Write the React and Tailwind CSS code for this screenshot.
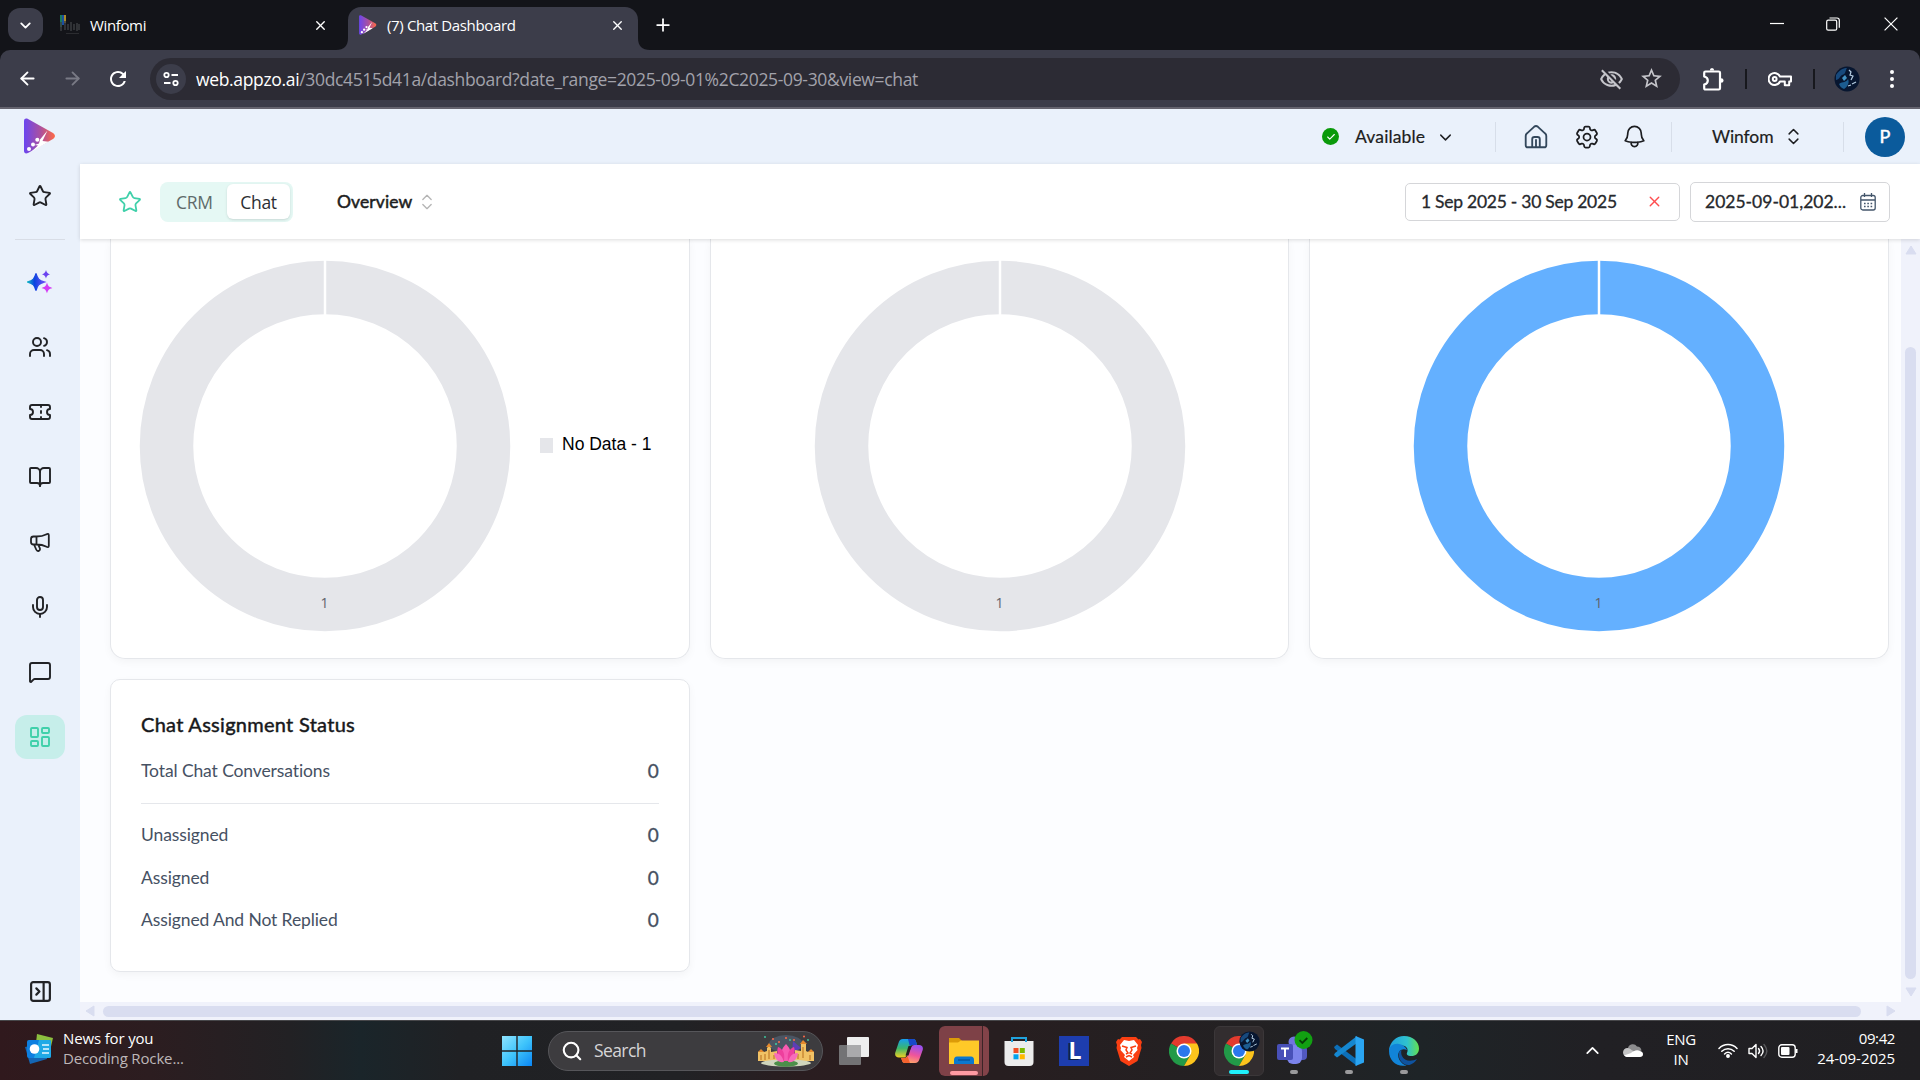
import React from "react";
import { ArrowLeft, ArrowRight, BookOpen, Check, ChevronDown, ChevronUp, ChevronsUpDown, LayoutDashboard, MessageSquare, Mic, PanelRightClose, Plus, Search, Star, Ticket, Users, X } from "lucide-react";
import { HiOutlineCog6Tooth, HiOutlineBell } from "react-icons/hi2";
import { MdOutlineVisibilityOff, MdStarOutline, MdRefresh } from "react-icons/md";

function PlayLogo({ className, id }) {
  return (
    <svg viewBox="0 0 32 36" className={className}>
      <defs>
        <linearGradient id={id} x1="0" x2="1">
          <stop offset="0" stopColor="#6b46f0" />
          <stop offset="0.55" stopColor="#ad519c" />
          <stop offset="1" stopColor="#ff6a45" />
        </linearGradient>
      </defs>
      <path d="M0 3C0 .6 2 0 4 1l25 14c2.600 1.600 2.600 4.400 0 6L4 35c-2 1-4 .4-4-2z" fill={`url(#${id})`} />
      <path d="M23.500 12.500 18.500 23l6 .8L7 34l7-6.500-3.500-.5 4.500-1.500 1-4z" fill="#fff" />
      <circle cx="5" cy="31" r="2" fill="#fff" />
      <circle cx="9" cy="26.500" r="2" fill="#fff" />
      <circle cx="13.300" cy="21.800" r="2" fill="#fff" />
    </svg>
  );
}

function Planet({ className }) {
  return (
    <svg viewBox="0 0 26 26" className={className}>
      <circle cx="13" cy="13" r="12.500" fill="#071630" />
      <path d="M2 9c4-6 8-7 11-7-2 3-1 6-5 7-2 1-3 5-6 5z" fill="#17497c" />
      <path d="M5 18c4-3 7-1 9-5 2 4-1 8-4 10-3-1-4-3-5-5z" fill="#1c5c90" />
      <path d="M15 4l2 2-1 3 3 1-2 4M18 18l4-2M14 20l3-1" stroke="#b5cde2" strokeWidth="1.200" fill="none" />
      <path d="M8 12l3-3 2 3-3 3z" fill="#4393c4" />
    </svg>
  );
}

function BrowserTabs() {
  return (
    <div className="flex h-[50px] shrink-0 items-start bg-[#131419] text-[15px] tracking-[-0.36px] text-white">
      <div className="ml-2 mt-2 flex h-[34px] w-[35px] items-center justify-center rounded-xl bg-[#3c3d4a]">
        <ChevronDown size={17} strokeWidth={2.600} />
      </div>
      <div className="ml-[17px] flex h-[50px] w-[288px] items-center">
        <svg viewBox="0 0 20 20" className="h-5 w-5">
          <path d="M0 0h2v12H0z" fill="#1b7a5a" /><path d="M2 0h2v10H2z" fill="#1b4fa0" /><path d="M4 0h2v8H4z" fill="#a98a2a" />
          <path d="M1 7v9M5 6v9M8 9v6M11 7v9M14 9v6M17 8v8M19 9v6" stroke="#3b3c40" strokeWidth="1.500" />
          <path d="M6 18.500h13" stroke="#2b2c30" />
        </svg>
        <span className="ml-[10px]">Winfomi</span>
        <X size={15} strokeWidth={2.200} className="ml-auto mr-[20px]" />
      </div>
      <svg viewBox="0 0 12 12" className="-ml-3 h-3 w-3 self-end"><path d="M12 0v12H0C8 12 12 8 12 0z" fill="#3c3d4a" /></svg>
      <div className="mt-[7px] flex h-[43px] w-[290px] items-center rounded-t-[13px] bg-[#3c3d4a] pb-[7px]">
        <PlayLogo id="tabLogo" className="ml-[11px] h-5 w-[18px]" />
        <span className="ml-[10px]">(7) Chat Dashboard</span>
        <X size={15} strokeWidth={2.200} className="ml-auto mr-[13px]" />
      </div>
      <svg viewBox="0 0 12 12" className="h-3 w-3 self-end"><path d="M0 0v12h12C4 12 0 8 0 0z" fill="#3c3d4a" /></svg>
      <Plus size={20} strokeWidth={2.100} className="ml-[3px] mt-[15px]" />
      <div className="ml-auto mr-[22px] mt-[17px] flex items-center">
        <svg viewBox="0 0 14 14" className="h-[14px] w-[14px]"><path d="M0 6.500h14" stroke="#fff" strokeWidth="1.200" /></svg>
        <svg viewBox="0 0 14 14" className="ml-[42px] h-[14px] w-[14px]" fill="none" stroke="#fff" strokeWidth="1.200">
          <rect x=".7" y="3.200" width="10" height="10" rx="1.500" /><path d="M3.500 1h7.500c1.500 0 2.300.8 2.300 2.300v7.500" />
        </svg>
        <svg viewBox="0 0 14 14" className="ml-11 h-[14px] w-[14px]"><path d="M.6.6l12.800 12.800M13.400.6L.6 13.400" stroke="#fff" strokeWidth="1.200" /></svg>
      </div>
    </div>
  );
}

function BrowserToolbar() {
  return (
    <div className="h-[59px] shrink-0 bg-[#131419]">
      <div className="flex h-[59px] items-center rounded-t-[10px] border-b-2 border-[#65646f] bg-[#3c3d4a] text-white">
        <ArrowLeft size={21} strokeWidth={2.100} className="ml-[17px]" />
        <ArrowRight size={21} strokeWidth={2.100} className="ml-6 text-[#797a85]" />
        <MdRefresh size={24} className="ml-[23px]" />
        <div className="ml-5 flex h-[42px] w-[1530px] items-center rounded-full bg-[#2c2b34] pl-[6px] pr-[16px]">
          <span className="flex h-[30px] w-[30px] items-center justify-center rounded-full bg-[#3c3d4a]">
            <svg viewBox="0 0 16 16" className="h-4 w-4" fill="none" stroke="#fff" strokeWidth="1.800">
              <circle cx="3.500" cy="4" r="2.200" /><path d="M8.500 4H15M1 12h6.500" /><circle cx="12.500" cy="12" r="2.200" />
            </svg>
          </span>
          <span className="ml-[10px] mt-[2px] whitespace-nowrap text-[17.5px] tracking-[-0.34px] text-[#a2a2ab]">
            <span className="text-white">web.appzo.ai</span>/30dc4515d41a/dashboard?date_range=2025-09-01%2C2025-09-30&amp;view=chat
          </span>
          <MdOutlineVisibilityOff size={25} className="ml-auto mt-px text-[#c5c5ca]" />
          <MdStarOutline size={25} className="ml-[15px] text-[#c5c5ca]" />
        </div>
        <svg viewBox="0 0 22 26" className="ml-[22px] h-[26px] w-[22px]" fill="none" stroke="#fff" strokeWidth="2.200" strokeLinejoin="round">
          <path d="M3.500 5.500h13.200q1.300 0 1.300 1.300v15.400q0 1.300-1.300 1.300H3.500q-1.300 0-1.300-1.300v-3.700q3.600-.8 3.600-4t-3.600-4V6.800q0-1.300 1.300-1.300z" />
          <path d="M7.800 4.500a2.200 2.600 0 0 1 4.400 0zM19 12.300a2.600 2.200 0 0 1 0 4.400z" fill="#fff" stroke="none" />
        </svg>
        <span className="ml-[21px] h-5 w-[2px] bg-[#17181d]" />
        <svg viewBox="0 0 24 18" className="ml-[21px] h-[18px] w-6" fill="none" stroke="#fff" strokeWidth="2" strokeLinejoin="round">
          <path d="M12 6.500H23v5h-1.800v3.800h-4.400v-3.800H12a6 6 0 1 1 0-5z" /><circle cx="6.700" cy="9" r="1.900" />
        </svg>
        <span className="ml-[21px] h-5 w-[2px] bg-[#17181d]" />
        <Planet className="ml-[19px] h-[26px] w-[26px]" />
        <svg viewBox="0 0 4 18" className="ml-[30px] h-[18px] w-1" fill="#fff"><circle cx="2" cy="2" r="2" /><circle cx="2" cy="9" r="2" /><circle cx="2" cy="16" r="2" /></svg>
      </div>
    </div>
  );
}

function Sparkles() {
  return (
    <svg viewBox="0 0 26 26" className="h-[26px] w-[26px]">
      <defs>
        <linearGradient id="spark" x1="0" x2="1"><stop offset="0" stopColor="#12b5c5" /><stop offset="0.4" stopColor="#0b45e0" /><stop offset="1" stopColor="#6a4df5" /></linearGradient>
      </defs>
      <path d="M9 4.500c1.300 5.200 3 7 8.300 8.500C12 14.500 10.300 16.300 9 21.500 7.700 16.300 6 14.500.7 13 6 11.500 7.700 9.700 9 4.500z" fill="url(#spark)" stroke="url(#spark)" strokeWidth="1.300" />
      <path d="M19 1c.9 2.800 1.400 3.400 4.200 4.300-2.800.9-3.300 1.500-4.200 4.300-.9-2.800-1.400-3.400-4.200-4.300C17.600 4.400 18.100 3.800 19 1z" fill="#6a42f0" />
      <path d="M20 13.500c1.100 3.600 1.800 4.300 5.400 5.400-3.600 1.100-4.300 1.800-5.400 5.400-1.100-3.600-1.800-4.300-5.400-5.400 3.600-1.100 4.300-1.800 5.400-5.400z" fill="#d43cf5" />
    </svg>
  );
}

function Megaphone() {
  return (
    <svg viewBox="0 0 24 24" className="h-6 w-6" fill="none" stroke="currentColor" strokeWidth="1.800" strokeLinejoin="round" strokeLinecap="round">
      <path d="M8.500 6.500H5.500a2.500 2.500 0 0 0-2.500 2.500v3a2.500 2.500 0 0 0 2.500 2.500h3zM8.500 6.500c4 0 7-.6 9.500-2 1.800-1 2.800-.8 2.800.8v10.400c0 1.600-1 1.800-2.800.8-2.500-1.400-5.500-2-9.500-2M6 14.500l2.200 5c.5 1.100 1.500 1.700 2.600 1.300 1.100-.4 1.500-1.500 1-2.600l-1.600-3.500" />
    </svg>
  );
}

function Sidebar() {
  const items = [Users, Ticket, BookOpen, Megaphone, Mic, MessageSquare];
  return (
    <aside className="flex w-20 shrink-0 flex-col items-center bg-[#eaf1fb] pr-px text-[#222326]">
      <PlayLogo id="appLogo" className="mt-[9px] h-9 w-8" />
      <Star size={24} strokeWidth={1.900} className="mt-[30px]" />
      <div className="mt-[31px] h-px w-[50px] bg-[#d8dde6]" />
      <div className="mt-[20px] flex h-11 items-center"><Sparkles /></div>
      <div className="mt-[21px] flex flex-col gap-[21px]">
        {items.map((Icon, i) => (
          <div key={i} className="flex h-11 w-[50px] items-center justify-center"><Icon size={24} strokeWidth={1.900} /></div>
        ))}
        <div className="flex h-11 w-[50px] items-center justify-center rounded-xl bg-[#c6eeea] text-[#40d0aa]"><LayoutDashboard size={24} strokeWidth={1.900} /></div>
      </div>
      <PanelRightClose size={25} strokeWidth={2.100} className="mb-[16px] ml-px mt-auto" />
    </aside>
  );
}

function AppHeader() {
  return (
    <header className="flex h-[55px] shrink-0 items-center bg-[#eaf1fb] font-[Lato,sans-serif] text-[17.5px] text-[#1c1d20]">
      <span className="ml-[1242px] flex h-[17px] w-[17px] items-center justify-center rounded-full bg-[#0a9a0a] text-white"><Check size={10} strokeWidth={2.600} /></span>
      <span className="ml-4 mt-[2px] w-[70px] tracking-[0.15px] [-webkit-text-stroke:0.2px]">Available</span>
      <ChevronDown size={19} strokeWidth={1.800} className="ml-[11px] mt-px" />
      <span className="ml-[40px] h-[30px] w-px bg-[#d7dee9]" />
      <svg viewBox="0 0 24 24" className="ml-[27px] h-[26px] w-[26px] text-[#33475b]" fill="none" stroke="currentColor" strokeWidth="1.700" strokeLinejoin="round">
        <path d="M2.500 11c0-1 .4-1.700 1.200-2.400l6.500-6c1.100-.9 2.500-.9 3.600 0l6.500 6c.8.700 1.200 1.400 1.200 2.400v8.500a2 2 0 0 1-2 2h-15a2 2 0 0 1-2-2zM8.500 21.500V14a2 2 0 0 1 2-2h3a2 2 0 0 1 2 2v7.500M12 14v7.500" />
      </svg>
      <HiOutlineCog6Tooth size={28} className="ml-[24px]" />
      <HiOutlineBell size={27} className="ml-[20px]" />
      <span className="ml-[23px] h-[30px] w-px bg-[#d7dee9]" />
      <span className="ml-10 mt-[2px] w-[62px] tracking-[-0.1px] [-webkit-text-stroke:0.2px]">Winfom</span>
      <ChevronsUpDown size={21} strokeWidth={1.700} className="ml-[9px]" />
      <span className="ml-[39px] h-[30px] w-px bg-[#d7dee9]" />
      <span className="ml-[21px] flex h-10 w-10 items-center justify-center rounded-full bg-[#0b5b9c] text-[18px] text-white [-webkit-text-stroke:0.5px]">P</span>
    </header>
  );
}

function FilterBar() {
  return (
    <div className="relative flex h-[75px] shrink-0 items-center bg-white font-[Lato,sans-serif] text-[17.5px] text-[#26282c] shadow-[0_1px_4px_rgba(0,0,0,0.14)]">
      <Star size={24} strokeWidth={1.800} className="ml-[38px] text-[#40d0aa]" />
      <div className="ml-[18px] flex h-10 w-[133px] items-center rounded-lg bg-[#e5f8f4] p-[3px] font-['Open_Sans',sans-serif] tracking-[-0.3px]">
        <span className="mt-[2px] w-16 pl-[13px] text-[#5f6b6a]">CRM</span>
        <span className="flex h-[35px] w-[63px] items-center justify-center rounded-md bg-white pt-[2px] text-[#2c2e33] shadow-sm">Chat</span>
      </div>
      <span className="ml-11 mt-[2px] w-[77px] tracking-[0.1px] text-[#1c1d20] [-webkit-text-stroke:0.5px]">Overview</span>
      <ChevronsUpDown size={20} strokeWidth={1.600} className="ml-[3px] text-[#b5b5b5]" />
      <div className="ml-auto flex h-[38px] w-[275px] items-center justify-between rounded-[5px] border border-[#d5d6d9] pl-[15px] pr-4">
        <span className="mt-[2px] whitespace-nowrap tracking-[-0.26px] [-webkit-text-stroke:0.3px]">1 Sep 2025 - 30 Sep 2025</span>
        <X size={17} strokeWidth={1.900} className="text-[#ff4d4f]" />
      </div>
      <div className="ml-[10px] mr-[30px] flex h-10 w-[200px] items-center justify-between rounded-[5px] border border-[#d5d6d9] pl-[14px] pr-[13px]">
        <span className="mt-[2px] whitespace-nowrap [-webkit-text-stroke:0.3px]">2025-09-01,202...</span>
        <svg viewBox="0 0 16 18" className="h-[18px] w-4 text-[#44566b]" fill="none" stroke="currentColor" strokeWidth="1.300">
          <rect x=".8" y="2.500" width="14.400" height="14.500" rx="2" /><path d="M1 7h14M4.500 0v4M11.500 0v4" /><path d="M4 10.500h8.500M4 13.500h8.500" strokeDasharray="1.600 1.700" />
        </svg>
      </div>
    </div>
  );
}

function Donut({ color }) {
  return (
    <svg viewBox="0 0 372 372" className="h-[372px] w-[372px] shrink-0">
      <circle cx="186" cy="186" r="158.500" fill="none" stroke={color} strokeWidth="53.500" />
      <path d="M186 0v56" stroke="#fff" strokeWidth="2.500" />
      <text x="185.500" y="347.500" textAnchor="middle" fontSize="14" fill="#5f636b" className="font-['Open_Sans',sans-serif]">1</text>
    </svg>
  );
}

function StatRow({ label, value }) {
  return (
    <div className="flex justify-between leading-6">
      <span className="tracking-[-0.11px]">{label}</span>
      <span className="text-[19px] [-webkit-text-stroke:0.3px]">{value}</span>
    </div>
  );
}

function Scroller() {
  return (
    <div className="flex min-h-0 flex-1 flex-col">
      <div className="flex min-h-0 flex-1">
        <main className="w-[1821px] bg-[#fcfdff] pl-[30px] pr-3">
          <div className="grid grid-cols-3 gap-5">
            <div className="flex h-[420px] items-start rounded-b-[15px] border border-t-0 border-[#e5e7eb] bg-white pl-[28px] pt-[20.5px] shadow-[0_3px_8px_rgba(0,0,0,0.04)]">
              <Donut color="#e5e6ea" />
              <div className="ml-[29px] flex h-[370px] items-center">
                <span className="mt-[2px] h-[15px] w-[13px] bg-[#e5e6ea]" />
                <span className="ml-[9px] whitespace-nowrap font-['Liberation_Sans',sans-serif] text-[17.5px] text-black">No Data - 1</span>
              </div>
            </div>
            <div className="flex h-[420px] items-start justify-center rounded-b-[15px] border border-t-0 border-[#e5e7eb] bg-white pl-px pt-[20.5px] shadow-[0_3px_8px_rgba(0,0,0,0.04)]"><Donut color="#e5e6ea" /></div>
            <div className="flex h-[420px] items-start justify-center rounded-b-[15px] border border-t-0 border-[#e5e7eb] bg-white pt-[20.5px] shadow-[0_3px_8px_rgba(0,0,0,0.04)]"><Donut color="#64b0ff" /></div>
            <section className="h-[293px] rounded-[10px] border border-[#e5e7eb] bg-white px-[30px] pt-[31px] font-[Lato,sans-serif] text-[17.5px] text-[#465163] shadow-[0_3px_8px_rgba(0,0,0,0.04)]">
              <h2 className="text-[20px] leading-[26px] tracking-[0.28px] text-[#17181b] [-webkit-text-stroke:0.45px]">Chat Assignment Status</h2>
              <div className="mt-[22px] border-b border-[#e5e7eb] pb-[20px]"><StatRow label="Total Chat Conversations" value="0" /></div>
              <div className="mt-[19px] flex flex-col gap-[18.5px]">
                <StatRow label="Unassigned" value="0" />
                <StatRow label="Assigned" value="0" />
                <StatRow label="Assigned And Not Replied" value="0" />
              </div>
            </section>
          </div>
        </main>
        <div className="flex w-[19px] flex-col items-center bg-[#f0f2fb]">
          <svg viewBox="0 0 12 10" className="mt-[6px] h-[10px] w-3" fill="#d9ddf0"><path d="M6 1l5 8H1z" stroke="#d9ddf0" strokeLinejoin="round" /></svg>
          <div className="mt-[92px] h-[632px] w-[11px] rounded-full bg-[#d9ddf0]" />
          <svg viewBox="0 0 12 10" className="mt-2 h-[10px] w-3" fill="#d9ddf0"><path d="M6 9l5-8H1z" stroke="#d9ddf0" strokeLinejoin="round" /></svg>
        </div>
      </div>
      <div className="flex h-[18px] shrink-0 items-center bg-[#f0f2fb]">
        <svg viewBox="0 0 10 12" className="ml-[5px] h-3 w-[10px]" fill="#d9ddf0"><path d="M1 6l8-5v10z" stroke="#d9ddf0" strokeLinejoin="round" /></svg>
        <div className="ml-2 h-[11px] w-[1758px] rounded-full bg-[#d9ddf0]" />
        <svg viewBox="0 0 10 12" className="ml-[25px] h-3 w-[10px]" fill="#d9ddf0"><path d="M9 6L1 1v10z" stroke="#d9ddf0" strokeLinejoin="round" /></svg>
      </div>
    </div>
  );
}

function ChromeIcon() {
  return (
    <svg viewBox="0 0 30 30" className="h-[30px] w-[30px]">
      <path d="M15 15L2 7.500A15 15 0 0 1 28 7.500z" fill="#e33b2e" />
      <path d="M2 7.500A15 15 0 0 0 15 30l6.500-11.200L15 15z" fill="#229a48" />
      <path d="M28 7.500A15 15 0 0 1 15 30l6.500-11.200L15 7.500z" fill="#fdc41c" />
      <circle cx="15" cy="15" r="7.500" fill="#fff" /><circle cx="15" cy="15" r="6" fill="#2b77ec" />
    </svg>
  );
}

function TaskCell({ children, dot, className = "" }) {
  return (
    <div className="flex w-[55px] justify-center">
      <div className={`relative flex h-[50px] w-[50px] items-center justify-center rounded-md ${className}`}>
        {children}
        {dot}
      </div>
    </div>
  );
}

const grayDot = <span className="absolute bottom-[2px] h-1 w-2 rounded-full bg-[#9a9a9c]" />;

function Lotus() {
  return (
    <svg viewBox="0 0 58 32" className="h-8 w-[58px]">
      <ellipse cx="29" cy="9" rx="17" ry="9" fill="#4b5563" />
      <path d="M36 6l8 7-9 5z" fill="#5b3fb5" />
      <path d="M1 26V17l3-2 3 2 3-1v-3l2-2 2 2v4l6-1v10zM57 26V17l-3-2-3 2-2-1V9l-2.500-2L44 9v7l-6-1v11z" fill="#f1c265" />
      <path d="M9 12l3-4 3 4zM43 9l3-4 4 4zM1 17l3-3 3 3zM51 17l3-3 3 3z" fill="#e58a2d" />
      <path d="M4 20v5M8 19v6M12 15v9M17 20v4M41 19v5M46 12v11M53 20v5" stroke="#c17c2b" strokeWidth="1.200" />
      <ellipse cx="29" cy="28" rx="25" ry="3.500" fill="#cfd6bd" />
      <ellipse cx="29" cy="28.500" rx="12" ry="3.200" fill="#4c8f4a" />
      <path d="M29 9c5 5 6 10 3 17h-6c-3-7-2-12 3-17z" fill="#f75bb2" />
      <path d="M21 12c5 2 7 6 6 14-6-2-8-8-6-14zM37 12c-5 2-7 6-6 14 6-2 8-8 6-14z" fill="#ee3f9d" />
      <path d="M17 18c6 0 8 3 10 9-6 1-9-3-10-9zM41 18c-6 0-8 3-10 9 6 1 9-3 10-9z" fill="#f86dba" />
      <g fill="#ff6b4a"><circle cx="16" cy="4" r="1" /><circle cx="22" cy="7" r="1" /><circle cx="37" cy="5" r="1" /><circle cx="47" cy="1.500" r="1" /><circle cx="29" cy="3" r="1" /></g>
      <g fill="#3fd0a5"><circle cx="8" cy="2" r=".9" /><circle cx="19" cy="9" r="1" /><circle cx="33" cy="5" r=".9" /><circle cx="51" cy="5" r=".9" /></g>
    </svg>
  );
}

function Taskbar() {
  return (
    <footer className="flex h-[60px] shrink-0 items-center border-t border-[#47474a] bg-[linear-gradient(90deg,#30191d_0,#2c1d20_150px,#222124_290px,#1a252a_360px,#202124_460px,#212225_680px,#2a1d20_800px,#271e20_1000px,#232123_1250px,#1e2427_1420px,#212024_1600px,#201f22_1920px)] text-[15px] text-white">
      <svg viewBox="0 0 28 30" className="mb-[3px] ml-[25px] h-[30px] w-7">
        <path d="M12 0l16 4-4 17-14-3z" fill="#8cbf3f" /><path d="M0 13l5 17 17-5-3-16z" fill="#1466b4" />
        <rect x="2" y="6" width="24" height="18" rx="2" fill="#0d7fe0" /><path d="M14 6h10a2 2 0 0 1 2 2v14a2 2 0 0 1-2 2H9z" fill="#1fa9e6" />
        <circle cx="9.500" cy="15" r="4.800" fill="#fff" /><path d="M17 11h7M18 15h6M17 19h7" stroke="#e7f8ff" strokeWidth="1.600" />
      </svg>
      <div className="mb-[5px] ml-[10px] w-[160px] leading-[20px] tracking-[-0.15px]">
        <div>News for you</div>
        <div className="text-[#bdb7b8]">Decoding Rocke...</div>
      </div>
      <svg viewBox="0 0 30 30" className="ml-[279px] h-[30px] w-[30px]">
        <defs><linearGradient id="win" x1="0" y1="0" x2="1" y2="1"><stop offset="0" stopColor="#8fe4ff" /><stop offset="0.5" stopColor="#3fc4fb" /><stop offset="1" stopColor="#0a86f5" /></linearGradient></defs>
        <path d="M0 0h14.300v14.300H0zM15.700 0H30v14.300H15.700zM0 15.700h14.300V30H0zM15.700 15.700H30V30H15.700z" fill="url(#win)" />
      </svg>
      <div className="ml-4 flex h-10 w-[275px] items-center rounded-full border border-[#56565a] bg-[#3d3c3f] text-[17.5px] tracking-[-0.6px] text-[#d6d5d6]">
        <Search size={22} strokeWidth={2.300} className="ml-[12px] text-white" />
        <span className="ml-[11px]">Search</span>
        <div className="ml-auto mr-[7px]"><Lotus /></div>
      </div>
      <div className="ml-[3px] flex">
        <TaskCell>
          <svg viewBox="0 0 30 28" className="h-7 w-[30px]"><rect x="8" y="0" width="22" height="20" rx="1" fill="#eeeeee" /><rect x="0" y="8" width="22" height="20" rx="1" fill="#737375" /><path d="M8 8h14v12H8z" fill="#aaaaac" /></svg>
        </TaskCell>
        <TaskCell>
          <svg viewBox="0 0 28 26" className="h-[26px] w-7">
            <defs>
              <linearGradient id="cpA" x1="0" y1="0" x2="0" y2="1"><stop offset="0" stopColor="#159ff0" /><stop offset="0.5" stopColor="#3bb66c" /><stop offset="1" stopColor="#f2d021" /></linearGradient>
              <linearGradient id="cpB" x1="0.500" y1="0" x2="0.200" y2="1"><stop offset="0" stopColor="#9a50ee" /><stop offset="0.5" stopColor="#f0559a" /><stop offset="1" stopColor="#ffb063" /></linearGradient>
            </defs>
            <path d="M8 1h10c2 0 2.600 1 3.200 3l.8 3h-4c-2 0-3 1-3.500 3l-2.800 7c-.7 2-1.500 2.500-3.500 2.500H4c-3 0-4.500-2-3.700-5L3.500 5C4.300 2.200 5.500 1 8 1z" fill="url(#cpA)" />
            <path d="M13 1h5c2 0 2.600 1 3.200 3l.8 3h-4c-2 0-2.500.5-3 2z" fill="#1748c9" />
            <path d="M20 25H10c-2 0-2.600-1-3.200-3l-.6-2H9c2 0 3-1 3.500-3l3.500-7c.7-2 1.500-3 3.500-3h4.500c3 0 4.500 2 3.700 5l-3.200 9c-.8 2.800-2 4-4.500 4z" fill="url(#cpB)" />
            <path d="M15 25h-5c-2 0-2.600-1-3.200-3l-.6-2H9c2 0 3-.5 3.500-2z" fill="#f4622e" />
            <path d="M13.500 8h3l-3 9.500h-3z" fill="#231d20" />
          </svg>
        </TaskCell>
        <TaskCell className="border-r-[6px] border-[#834349] bg-[#7e4147] shadow-[inset_-1px_0_0_#3b2427]" dot={<span className="absolute bottom-[1px] left-[11px] h-1 w-7 rounded-full bg-[#ff9aa2]" />}>
          <svg viewBox="0 0 30 27" className="ml-[6px] h-[27px] w-[30px]"><path d="M0 1h10l3 3-3 4H0z" fill="#dc9b08" /><path d="M0 5.500h9l3-2h18V27H0z" fill="#ffc928" /><path d="M5 27v-4c0-2 1-3.500 3-3.500h14c2 0 3 1.500 3 3.500v4z" fill="#0b78cf" /><path d="M9 23h12" stroke="#054f94" strokeWidth="1.200" /></svg>
        </TaskCell>
        <TaskCell>
          <svg viewBox="0 0 30 30" className="h-[30px] w-[30px]"><path d="M0.500 5h29v21a4 4 0 0 1-4 4h-21a4 4 0 0 1-4-4z" fill="#ececec" /><path d="M8 6V2h14v4" fill="none" stroke="#20a3de" strokeWidth="2" /><path d="M9.500 12h5v5h-5z" fill="#f04e24" /><path d="M15.800 12h5v5h-5z" fill="#7db900" /><path d="M9.500 18.300h5v5h-5z" fill="#00a3ee" /><path d="M15.800 18.300h5v5h-5z" fill="#ffb900" /></svg>
        </TaskCell>
        <TaskCell><span className="flex h-[30px] w-[30px] items-center justify-center bg-[#1d3dae] pb-px pl-[3px] text-[23px] font-bold leading-none [text-shadow:-2px_1px_0_#0b2148]">L</span></TaskCell>
        <TaskCell>
          <svg viewBox="0 0 26 30" className="h-[30px] w-[26px]"><path d="M6 1h14l2.500 2.500L24 3l2 3-1 3 .5 3-4 13L13 30 4.500 25 .5 12 1 9 0 6l2-3 1.500.5z" fill="#fa3f12" /><path d="M13 5l5-1 4 5-1 3 .5 2-4.500 5 1 2-5 4-5-4 1-2-4.500-5L5 12 4 9l4-5z" fill="#fff" /><path d="M6 10l5 1.500-1 2.500 2 3-2 1M20 10l-5 1.500 1 2.500-2 3 2 1M10 21l3-1.500 3 1.500" fill="none" stroke="#fa3f12" strokeWidth="1.500" /></svg>
        </TaskCell>
        <TaskCell><ChromeIcon /></TaskCell>
        <TaskCell className="border border-[#3b3739] bg-[#322d2f]" dot={<span className="absolute bottom-px h-1 w-5 rounded-full bg-[#1ff0fb]" />}>
          <ChromeIcon /><Planet className="absolute right-[3px] top-1 h-[21px] w-[21px]" />
        </TaskCell>
        <TaskCell dot={grayDot}>
          <svg viewBox="0 0 36 34" className="mb-[6px] ml-[3px] h-[34px] w-9"><circle cx="17" cy="11" r="5.500" fill="#6f75dd" /><rect x="21" y="15" width="9" height="14" rx="4" fill="#5158c0" /><rect x="10" y="14" width="15" height="19" rx="6" fill="#7b83eb" /><rect x="0" y="13" width="16" height="16" rx="2" fill="#4850b8" /><path d="M4 17.500h8M8 17.500V26" stroke="#fff" strokeWidth="2" /><circle cx="26.500" cy="9" r="9" fill="#12a012" /><path d="M22.500 9.200l2.800 2.800 5-5" fill="none" stroke="#063d06" strokeWidth="1.800" /></svg>
        </TaskCell>
        <TaskCell dot={grayDot}>
          <svg viewBox="0 0 30 30" className="h-[30px] w-[30px]"><path d="M0 11l3-2.500 20 15V30L1 13z" fill="#0c6fb8" /><path d="M0 19l3 2.500L23 7V0L1 17z" fill="#1587d0" /><path d="M21.500 0L30 3.500v23L21.500 30z" fill="#2aa5f2" /></svg>
        </TaskCell>
        <TaskCell dot={grayDot}>
          <svg viewBox="0 0 30 30" className="h-[30px] w-[30px]">
            <defs><linearGradient id="edA" x1="0" x2="1"><stop offset="0" stopColor="#1f9fdf" /><stop offset="0.6" stopColor="#2fc2cf" /><stop offset="1" stopColor="#63e04f" /></linearGradient></defs>
            <path d="M0 14C1 6 7 0 15 0c9 0 15 6 15 12.500 0 5-3.500 7.500-7.500 7.500-4 0-5.300-1.500-4.500-3 2-4-1-7.500-5-7.500-5 0-9 2-13 4.500z" fill="url(#edA)" />
            <path d="M0 15C0 10 5 7 10 8c4 .8 7 3 8 6-7-3-11 4-7.500 10 1.500 2.600 4 4.600 7 5.500C8 31.500 0 25 0 15z" fill="#1184d8" />
            <path d="M10.500 15c-3 7 3 15 10 14 3-1 6-3 7.500-6-6 3-13 2-15-3-1-2-1-4-.5-6z" fill="#0f539f" />
          </svg>
        </TaskCell>
      </div>
      <div className="ml-auto mr-[25px] flex items-center">
        <ChevronUp size={21} strokeWidth={2} />
        <svg viewBox="0 0 20 13" className="ml-[20px] h-[13px] w-5"><path d="M5 4a5 5 0 0 1 9-1.500c2.500 0 4 1.500 4.500 4L7 10z" fill="#8c8c8e" /><path d="M0 8.500C0 6 2 4 4.500 4c2 0 3 1 4 2L14 9 5 13C2 13 0 11 0 8.500z" fill="#c4c4c5" /><path d="M8 9c2-2 6-4 9-2 2 .5 3 1.500 3 3.200 0 1.700-1.200 2.800-3 2.800H5c-2 0-3-.6-4-1.500z" fill="#fff" /></svg>
        <div className="mb-[3px] ml-[20px] w-9 text-center leading-[20px] tracking-[-0.3px]"><div>ENG</div><div>IN</div></div>
        <svg viewBox="0 0 20 15" className="ml-[19px] h-[15px] w-5" fill="none" stroke="#fff" strokeWidth="1.500" strokeLinecap="round"><path d="M1 5.500c5-5.200 13-5.200 18 0M3.800 8.300c3.600-3.500 8.800-3.500 12.400 0M6.600 11c2-2 4.800-2 6.800 0" /><circle cx="10" cy="13" r="1.200" fill="#fff" /></svg>
        <svg viewBox="0 0 20 16" className="ml-[10px] h-4 w-5" fill="none" stroke="#fff" strokeWidth="1.400" strokeLinejoin="round" strokeLinecap="round"><path d="M1 5.500h3L8 1.500v13l-4-4H1z" /><path d="M10.500 5.500c1.300 1.500 1.300 3.500 0 5M13 3.500c2.500 2.700 2.500 6.300 0 9" /><path d="M16 1.500c3.500 4 3.500 9 0 13" stroke="#58585b" /></svg>
        <svg viewBox="0 0 20 14" className="ml-[10px] h-[14px] w-5"><rect x=".8" y=".8" width="16.400" height="12.400" rx="3" fill="none" stroke="#fff" strokeWidth="1.400" /><rect x="3" y="3" width="8.500" height="8" rx="1" fill="#fff" /><path d="M18.500 5v4" stroke="#fff" strokeWidth="2" /></svg>
        <div className="mb-[5px] ml-[15px] w-[82px] text-right leading-[20px] tracking-[-0.05px]"><div className="tracking-[-0.4px]">09:42</div><div>24-09-2025</div></div>
      </div>
    </footer>
  );
}

export default function App() {
  return (
    <div className="flex h-[1080px] w-[1920px] flex-col overflow-hidden font-['Open_Sans',sans-serif]">
      <BrowserTabs />
      <BrowserToolbar />
      <div className="flex min-h-0 flex-1">
        <Sidebar />
        <div className="flex min-w-0 flex-1 flex-col">
          <AppHeader />
          <FilterBar />
          <Scroller />
        </div>
      </div>
      <Taskbar />
    </div>
  );
}
